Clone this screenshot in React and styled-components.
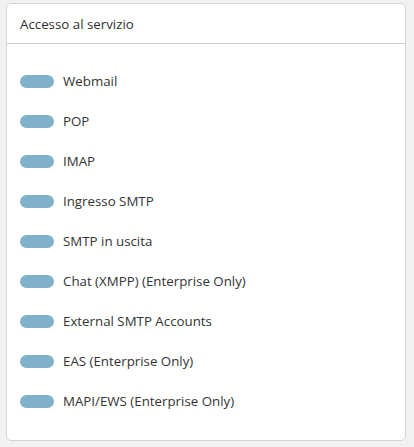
import React from "react";
import styled, { createGlobalStyle } from "styled-components";

const Global = createGlobalStyle`
  html, body { margin: 0; padding: 0; background: #f1f1f1; }
  body { font-family: "Open Sans", "Noto Sans", sans-serif; color: #333; }
`;

const Page = styled.div`
  padding: 3px 8px 6px 6px;
`;

const Card = styled.section`
  background: #fff;
  border: 1px solid #d4d4d4;
  border-radius: 5px;
  box-sizing: border-box;
  height: 438px;
  width: 400px;
`;

const Header = styled.div`
  height: 39px;
  border-bottom: 1px solid #d2d2d2;
  display: flex;
  align-items: center;
  padding-left: 13px;
  font-size: 13.3px;
  color: #2f2f2f;
`;

const List = styled.div`
  display: flex;
  flex-direction: column;
  padding: 17px 0 0 13px;
`;

const Row = styled.div`
  display: flex;
  align-items: center;
  height: 40px;
  gap: 9px;
  font-size: 13.3px;
  color: #333;
`;

const Toggle = styled.span`
  display: inline-block;
  width: 34px;
  height: 13px;
  border-radius: 7px;
  background: #7fb1c9;
  flex: none;
`;

const items = [
  "Webmail",
  "POP",
  "IMAP",
  "Ingresso SMTP",
  "SMTP in uscita",
  "Chat (XMPP) (Enterprise Only)",
  "External SMTP Accounts",
  "EAS (Enterprise Only)",
  "MAPI/EWS (Enterprise Only)",
];

export default function App() {
  return (
    <>
      <Global />
      <Page>
        <Card>
          <Header>Accesso al servizio</Header>
          <List>
            {items.map((t) => (
              <Row key={t}>
                <Toggle />
                <span>{t}</span>
              </Row>
            ))}
          </List>
        </Card>
      </Page>
    </>
  );
}
